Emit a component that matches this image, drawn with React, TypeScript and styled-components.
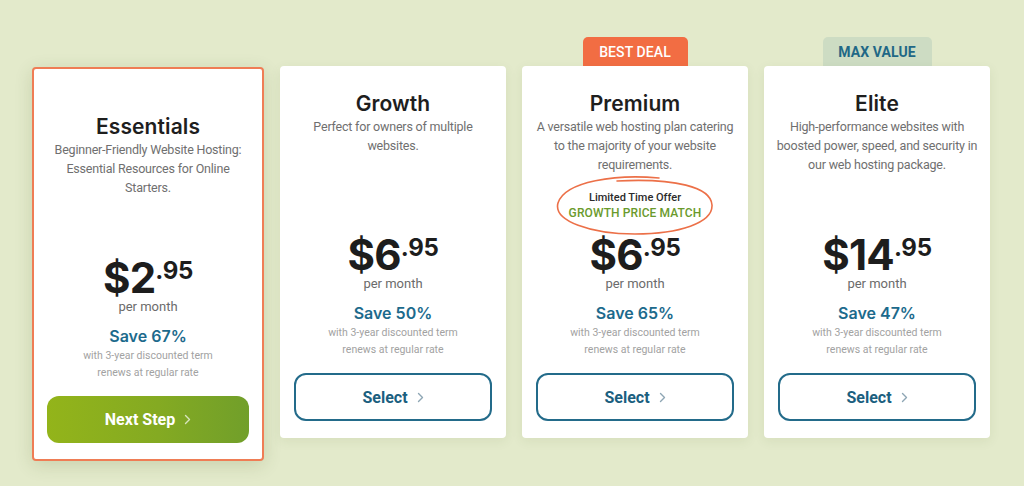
import React from "react";
import styled, { createGlobalStyle, css } from "styled-components";

const Global = createGlobalStyle`
  html, body { margin: 0; padding: 0; }
  body {
    background: #e3eacb;
    width: 1024px;
    height: 486px;
    overflow: hidden;
    font-family: Roboto, "Liberation Sans", sans-serif;
  }
`;

const Page = styled.div`
  display: flex;
  align-items: flex-start;
  gap: 16px;
  padding: 37px 0 0 32px;
`;

const Column = styled.div<{ $w: number }>`
  width: ${(p) => p.$w}px;
  display: flex;
  flex-direction: column;
  align-items: center;
`;

const Badge = styled.div<{ $tone?: "orange" | "sage" | "none" }>`
  height: 29px;
  width: ${(p) => (p.$tone === "sage" ? 109 : 105)}px;
  border-radius: 5px 5px 0 0;
  display: flex;
  align-items: center;
  justify-content: center;
  font-size: 14px;
  letter-spacing: 0.1px;
  ${(p) =>
    p.$tone === "orange" &&
    css`
      background: #f26d43;
      color: #fff;
      font-weight: 500;
    `}
  ${(p) =>
    p.$tone === "sage" &&
    css`
      background: #cddcc3;
      color: #1f6886;
      font-weight: 700;
    `}
  ${(p) =>
    (!p.$tone || p.$tone === "none") &&
    css`
      visibility: hidden;
    `}
`;

const Card = styled.div<{ $featured?: boolean }>`
  box-sizing: border-box;
  width: 100%;
  background: #fff;
  border-radius: 4px;
  display: flex;
  flex-direction: column;
  align-items: center;
  text-align: center;
  padding: 25px 14px 17px;
  box-shadow: 0 3px 12px rgba(70, 90, 30, 0.08);
  ${(p) =>
    p.$featured &&
    css`
      margin-top: 1px;
      border: 2px solid #ef7d55;
      padding: 45px 13px 16px;
      box-shadow: 0 4px 18px rgba(60, 80, 20, 0.16);
    `}
`;

const Header = styled.div`
  height: 143px;
  width: 100%;
  display: flex;
  flex-direction: column;
  align-items: center;
`;

const Title = styled.div`
  font-family: Inter, "Liberation Sans", sans-serif;
  font-weight: 600;
  font-size: 21px;
  line-height: 26px;
  color: #1e1e1e;
  letter-spacing: 0.1px;
`;

const Desc = styled.div<{ $featured?: boolean }>`
  align-self: stretch;
  margin: ${(p) => (p.$featured ? "0 2px" : "0 -6px")};
  font-size: 12.5px;
  letter-spacing: -0.2px;
  line-height: 19px;
  color: #6f6f6f;
`;

const Offer = styled.div`
  position: relative;
  margin-top: 8px;
  padding: 8px 0;
  display: flex;
  flex-direction: column;
  align-items: center;
`;

const OfferTop = styled.div`
  font-size: 11px;
  line-height: 15px;
  font-weight: 500;
  color: #2b2b2b;
`;

const OfferMain = styled.div`
  font-size: 12px;
  line-height: 16px;
  font-weight: 500;
  color: #6a9a2c;
  letter-spacing: 0.1px;
`;

const Oval = styled.svg`
  position: absolute;
  left: 50%;
  top: -9px;
  transform: translateX(-50%);
  pointer-events: none;
`;

const Price = styled.div`
  display: flex;
  align-items: flex-start;
  justify-content: center;
  font-family: Inter, "Liberation Sans", sans-serif;
  font-weight: 700;
  color: #1d1d1d;
  height: 42px;
`;

const Dollars = styled.span`
  font-size: 42px;
  line-height: 42px;
  letter-spacing: -0.8px;
`;

const Cents = styled.span`
  font-size: 24px;
  line-height: 24px;
  margin-top: 2px;
  letter-spacing: -0.3px;
`;

const PerMonth = styled.div`
  font-size: 13px;
  line-height: 16px;
  color: #6b6b6b;
`;

const Save = styled.div`
  margin-top: 10px;
  font-family: Inter, "Liberation Sans", sans-serif;
  font-weight: 600;
  font-size: 16px;
  line-height: 22px;
  color: #1c6a8c;
`;

const Terms = styled.div`
  font-size: 10.5px;
  line-height: 17px;
  color: #a2a2a2;
`;

const Button = styled.button<{ $primary?: boolean }>`
  margin-top: 15px;
  box-sizing: border-box;
  width: 100%;
  height: 48px;
  border-radius: 12px;
  display: flex;
  align-items: center;
  justify-content: center;
  gap: 9px;
  font-family: Roboto, "Liberation Sans", sans-serif;
  font-weight: 700;
  font-size: 16px;
  cursor: pointer;
  ${(p) =>
    p.$primary
      ? css`
          height: 47px;
          border: none;
          color: #fff;
          background: linear-gradient(90deg, #93b41a 0%, #84aa22 55%, #719f2a 100%);
        `
      : css`
          border: 2px solid #236b8a;
          color: #1b5f7f;
          background: #fff;
        `}
`;

const Chevron = ({ color }: { color: string }) => (
  <svg width="7" height="11" viewBox="0 0 7 11" fill="none">
    <path d="M1.5 1.5 L5.5 5.5 L1.5 9.5" stroke={color} strokeWidth="1.4" strokeLinecap="round" strokeLinejoin="round" />
  </svg>
);

type Plan = {
  name: string;
  desc: string;
  dollars: string;
  cents: string;
  save: string;
  badge?: "orange" | "sage";
  badgeText?: string;
  featured?: boolean;
  offer?: boolean;
  width: number;
};

const plans: Plan[] = [
  {
    name: "Essentials",
    desc: "Beginner-Friendly Website Hosting: Essential Resources for Online Starters.",
    dollars: "$2",
    cents: ".95",
    save: "Save 67%",
    featured: true,
    width: 232,
  },
  {
    name: "Growth",
    desc: "Perfect for owners of multiple websites.",
    dollars: "$6",
    cents: ".95",
    save: "Save 50%",
    width: 226,
  },
  {
    name: "Premium",
    desc: "A versatile web hosting plan catering to the majority of your website requirements.",
    dollars: "$6",
    cents: ".95",
    save: "Save 65%",
    badge: "orange",
    badgeText: "BEST DEAL",
    offer: true,
    width: 226,
  },
  {
    name: "Elite",
    desc: "High-performance websites with boosted power, speed, and security in our web hosting package.",
    dollars: "$14",
    cents: ".95",
    save: "Save 47%",
    badge: "sage",
    badgeText: "MAX VALUE",
    width: 226,
  },
];

export default function App() {
  return (
    <>
      <Global />
      <Page>
        {plans.map((p) => (
          <Column key={p.name} $w={p.width}>
            <Badge $tone={p.badge ?? "none"}>{p.badgeText ?? ""}</Badge>
            <Card $featured={p.featured}>
              <Header>
                <Title>{p.name}</Title>
                <Desc $featured={p.featured}>{p.desc}</Desc>
                {p.offer && (
                  <Offer>
                    <Oval width="160" height="64" viewBox="0 0 160 64" fill="none">
                      <path
                        d="M104 5 C62 1, 10 8, 3 30 C-2 48, 36 61, 80 61 C124 61, 158 50, 157 32 C156 14, 120 5, 62 8"
                        stroke="#ec7048"
                        strokeWidth="1.6"
                        strokeLinecap="round"
                        fill="none"
                      />
                    </Oval>
                    <OfferTop>Limited Time Offer</OfferTop>
                    <OfferMain>GROWTH PRICE MATCH</OfferMain>
                  </Offer>
                )}
              </Header>
              <Price>
                <Dollars>{p.dollars}</Dollars>
                <Cents>{p.cents}</Cents>
              </Price>
              <PerMonth>per month</PerMonth>
              <Save>{p.save}</Save>
              <Terms>
                with 3-year discounted term
                <br />
                renews at regular rate
              </Terms>
              <Button $primary={p.featured}>
                {p.featured ? "Next Step" : "Select"}
                <Chevron color={p.featured ? "rgba(255,255,255,0.7)" : "#8ea6b4"} />
              </Button>
            </Card>
          </Column>
        ))}
      </Page>
    </>
  );
}
